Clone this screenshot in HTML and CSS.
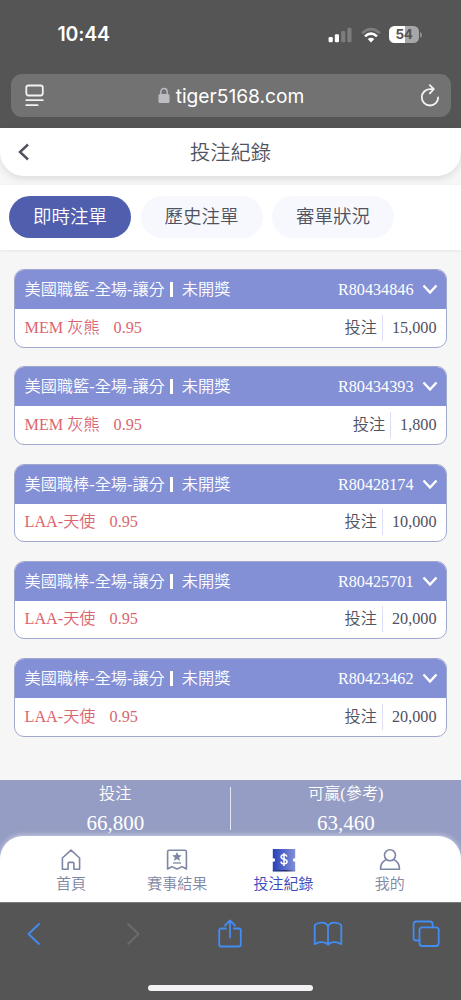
FILE: index.html
```html
<!DOCTYPE html>
<html lang="zh-Hant">
<head>
<meta charset="utf-8">
<meta name="viewport" content="width=device-width, initial-scale=1">
<title>投注紀錄</title>
<link rel="stylesheet" href="styles.css">
</head>
<body>
<div class="phone">
  <header class="browser-top">
    <div class="status">
      <span class="clock">10:44</span>
      <div class="indicators">
        <svg width="24" height="16" viewBox="0 0 24 16"><rect x=".6" y="10" width="4.2" height="5.2" rx="1.2" fill="#fff"/><rect x="6.8" y="7.2" width="4.2" height="8" rx="1.2" fill="#fff"/><rect x="13.1" y="4" width="4.2" height="11.2" rx="1.2" fill="#7d7d7d"/><rect x="19.3" y=".8" width="4.2" height="14.4" rx="1.2" fill="#7d7d7d"/></svg>
        <svg class="wifi" width="20" height="16" viewBox="0 0 20 16" fill="none" stroke-width="2.6"><path d="M1.2 6.2Q10-1.8 18.8 6.2" stroke="#7d7d7d"/><path d="M4 9.4Q10 4 16 9.4" stroke="#fff"/><path d="M6.7 12.1Q10 9.2 13.3 12.1L10 15.5Z" fill="#fff"/></svg>
        <span class="battery"><span>54</span></span>
        <svg class="battery-cap" width="3" height="6" viewBox="0 0 3 6"><path d="M0 0Q2 1 2 3T0 6Z" fill="#929292"/></svg>
      </div>
    </div>
    <div class="address">
      <svg width="20" height="24" viewBox="0 0 20 24" fill="none" stroke="#f2f2f2" stroke-width="1.8" stroke-linecap="round"><rect x="1.3" y="1.5" width="16.5" height="10" rx="2.2"/><path d="M1.3 16.2h16.5M1.3 21.2h11.3"/></svg>
      <div class="site"><svg width="12" height="17" viewBox="0 0 12 17"><path d="M2.8 8V4.700a3.200 3.200 0 0 1 6.400 0V8" fill="none" stroke="#bdbcc3" stroke-width="1.400"/><rect x=".5" y="7" width="11" height="9" rx="1.500" fill="#bdbcc3"/></svg><span>tiger5168.com</span></div>
      <svg width="20" height="23" viewBox="0 0 20 23" fill="none" stroke="#f2f2f2" stroke-width="1.8" stroke-linecap="round" stroke-linejoin="round"><path d="M13.200 5.100H10a8.200 8.200 0 1 0 8.200 8.200M9.800 1.200l4 3.900-4 4.200"/></svg>
    </div>
  </header>
  <main class="app">
    <div class="title-bar">
      <svg width="12" height="18" viewBox="0 0 12 18" fill="none" stroke="#50525f" stroke-width="2.4"><path d="M10 1.5L2 9l8 7.5"/></svg>
      <h1>投注紀錄</h1>
    </div>
    <nav class="tabs"><span class="tab active">即時注單</span><span class="tab">歷史注單</span><span class="tab">審單狀況</span></nav>
    <section class="bets">
      <article class="bet">
        <div class="bet-head"><span>美國職籃-全場-讓分</span><i></i><span>未開獎</span><span class="serial">R80434846</span><svg width="16" height="11" viewBox="0 0 16 11"><path d="M1.500 1.500L8 8.500l6.500-7"/></svg></div>
        <div class="bet-body"><span class="pick">MEM 灰熊</span><span class="odds">0.95</span><span class="stake">投注</span><b>15,000</b></div>
      </article>
      <article class="bet">
        <div class="bet-head"><span>美國職籃-全場-讓分</span><i></i><span>未開獎</span><span class="serial">R80434393</span><svg width="16" height="11" viewBox="0 0 16 11"><path d="M1.500 1.500L8 8.500l6.500-7"/></svg></div>
        <div class="bet-body"><span class="pick">MEM 灰熊</span><span class="odds">0.95</span><span class="stake">投注</span><b>1,800</b></div>
      </article>
      <article class="bet">
        <div class="bet-head"><span>美國職棒-全場-讓分</span><i></i><span>未開獎</span><span class="serial">R80428174</span><svg width="16" height="11" viewBox="0 0 16 11"><path d="M1.500 1.500L8 8.500l6.500-7"/></svg></div>
        <div class="bet-body"><span class="pick">LAA-天使</span><span class="odds">0.95</span><span class="stake">投注</span><b>10,000</b></div>
      </article>
      <article class="bet">
        <div class="bet-head"><span>美國職棒-全場-讓分</span><i></i><span>未開獎</span><span class="serial">R80425701</span><svg width="16" height="11" viewBox="0 0 16 11"><path d="M1.500 1.500L8 8.500l6.500-7"/></svg></div>
        <div class="bet-body"><span class="pick">LAA-天使</span><span class="odds">0.95</span><span class="stake">投注</span><b>20,000</b></div>
      </article>
      <article class="bet">
        <div class="bet-head"><span>美國職棒-全場-讓分</span><i></i><span>未開獎</span><span class="serial">R80423462</span><svg width="16" height="11" viewBox="0 0 16 11"><path d="M1.500 1.500L8 8.500l6.500-7"/></svg></div>
        <div class="bet-body"><span class="pick">LAA-天使</span><span class="odds">0.95</span><span class="stake">投注</span><b>20,000</b></div>
      </article>
    </section>
  </main>
  <footer class="app-footer">
    <div class="summary">
      <div class="total"><span>投注</span><strong>66,800</strong></div>
      <div class="total"><span>可贏(參考)</span><strong>63,460</strong></div>
    </div>
    <nav class="menu">
      <a class="menu-item"><svg width="24" height="24" viewBox="0 0 24 24" fill="none" stroke="#7d86a2" stroke-width="1.6" stroke-linejoin="round"><path d="M3.4 10L12 2.2l8.6 7.8v11.2h-5.7v-5.8a1 1 0 0 0-1-1h-3.8a1 1 0 0 0-1 1v5.8H3.4Z"/></svg><span>首頁</span></a>
      <a class="menu-item"><svg width="24" height="24" viewBox="0 0 24 24" fill="none" stroke="#7d86a2" stroke-width="1.6" stroke-linejoin="round"><path d="M2.6 21V3.8c0-1 .6-1.6 1.6-1.6h15.6c1 0 1.6.6 1.6 1.6V21L17 18.6 12 21l-5-2.4Z"/><path d="M8 15h8" stroke-width="1.3"/><path d="M12 4l1.400 3.100 3.400.3-2.600 2.200.8 3.400-3-1.900L9 13l.8-3.400-2.600-2.200 3.400-.3Z" fill="#7d86a2" stroke="none"/></svg><span>賽事結果</span></a>
      <a class="menu-item current"><svg width="24" height="24" viewBox="0 0 24 24"><defs><linearGradient id="ticket"><stop stop-color="#2941b8"/><stop offset="1" stop-color="#828fd8"/></linearGradient><linearGradient id="ticket-edge"><stop stop-color="#263a9e"/><stop offset=".6" stop-color="#18214f"/><stop offset="1" stop-color="#8490cb"/></linearGradient></defs><path d="M.8 1h22.400v9.400a1.700 1.700 0 1 0 0 3.200v9.600H.8v-9.600a1.700 1.700 0 1 0 0-3.200Z" fill="url(#ticket)"/><path d="M.8 22.200h22.400v1.200H.8Z" fill="url(#ticket-edge)"/><path d="M15 8.600c-.4-1.300-1.400-1.900-3-1.900-1.800 0-2.900.8-2.900 2.200 0 3.200 6 1.300 6 4.700 0 1.400-1.200 2.300-3 2.300-1.900 0-3-.8-3.200-2.300M12 5v13" fill="none" stroke="#fff" stroke-width="1.500"/></svg><span>投注紀錄</span></a>
      <a class="menu-item"><svg width="24" height="24" viewBox="0 0 24 24" fill="none" stroke="#7d86a2" stroke-width="1.6" stroke-linejoin="round"><circle cx="12" cy="7.2" r="5.5"/><path d="M8.4 11.6C4.6 13.2 2.6 16.5 2.5 21.2h19c-.1-4.7-2.1-8-5.9-9.6"/></svg><span>我的</span></a>
    </nav>
  </footer>
  <footer class="browser-bottom">
    <div class="toolbar">
      <svg width="30" height="30" viewBox="0 0 30 30"><path d="M20 5L9.5 15 20 25"/></svg>
      <svg class="disabled" width="30" height="30" viewBox="0 0 30 30"><path d="M11 5l10.500 10L11 25"/></svg>
      <svg width="30" height="30" viewBox="0 0 30 30"><path d="M11 9.5H6.2c-1.5 0-2 .7-2 2v14c0 1.4.7 2 2 2h17.6c1.3 0 2-.7 2-2v-14c0-1.3-.6-2-2-2H19M15 18.5V1.5M10 6.5l5-5 5 5"/></svg>
      <svg width="30" height="30" viewBox="0 0 30 30"><path d="M15 7C12.5 2.5 5 2.8 1.7 6.2v19C5 22.8 12 22 15 25.7c3-3.7 10-2.9 13.3-.5v-19C25 2.8 17.500 2.500 15 7v18.700"/></svg>
      <svg width="30" height="30" viewBox="0 0 30 30"><path d="M8.500 21.500H5.300c-1.800 0-2.700-.8-2.700-2.600V5.200c0-1.800.9-2.700 2.700-2.700h13.600c1.800 0 2.700.9 2.700 2.700v3.200"/><rect x="8.500" y="8.400" width="19.200" height="18.600" rx="2.700"/></svg>
    </div>
    <div class="home-indicator"></div>
  </footer>
</div>
</body>
</html>
```
FILE: styles.css
```css
* { box-sizing: border-box; }
body { margin: 0; background: #555; }
svg { display: block; flex: none; }
.phone {
  width: 461px;
  height: 1000px;
  display: flex;
  flex-direction: column;
  overflow: hidden;
  font-family: "Liberation Serif", "Noto Sans CJK TC", sans-serif;
  font-weight: 350;
  color: #50525f;
}
.browser-top { height: 128px; background: #555; padding: 0 10.5px; flex: none; }
.status { height: 74px; padding: 22px 27.500px 0 47px; display: flex; justify-content: space-between; color: #fff; font-family: Inter, sans-serif; }
.clock { font-size: 19.500px; line-height: 25px; font-weight: 600; letter-spacing: -.2px; }
.indicators { display: flex; height: 25px; align-items: center; }
.wifi { margin-left: 9px; }
.battery { width: 30px; height: 17px; margin-left: 8px; border-radius: 5.5px; background: linear-gradient(90deg, #fff 54%, #a7a7a7 54%); color: #555; font-size: 13.500px; font-weight: 700; line-height: 17px; text-align: center; letter-spacing: -.4px; }
.battery-cap { margin-left: 1px; }
.address { height: 43px; border-radius: 11px; background: #727272; padding: 0 11px 0 14px; display: flex; align-items: center; justify-content: space-between; }
.site { display: flex; align-items: center; gap: 6px; margin-left: -2px; color: #fff; font: 400 19.200px/28px Inter, sans-serif; }
.app { height: 652px; flex: none; background: #f6f6f6; }
.title-bar { height: 47.500px; display: grid; grid-template-columns: 60px 1fr 60px; align-items: center; background: #fff; border-radius: 0 0 24px 24px; box-shadow: 0 3px 7px #0000001a; }
.title-bar svg { margin-left: 18px; }
.title-bar h1 { margin: 0; padding-top: 2px; font-size: 20.300px; line-height: 30px; font-weight: 350; text-align: center; }
.tabs { height: 65.500px; margin-top: 9px; padding: 0 9px; display: flex; gap: 9.500px; align-items: center; background: #fff; box-shadow: 0 1px 3px #00000010; }
.tab { width: 122px; height: 42px; border-radius: 21px; background: #f7f8fd; text-align: center; font-size: 18.500px; line-height: 43px; }
.tab.active { background: #505eae; color: #fff; }
.bets { padding: 19px 14px 0 13.500px; display: grid; gap: 18.750px; }
.bet { height: 78.500px; border: 1.500px solid #a1a8d0; border-radius: 10px; background: #fff; overflow: hidden; font-size: 16.200px; line-height: 24px; }
.bet-head { height: 39px; background: #8390d6; color: #fff; padding: 0 8.500px 0 10px; display: flex; align-items: center; }
.bet-head > span { padding-top: 1px; }
.bet-head i { width: 3px; height: 15px; margin: 0 9px 0 5px; background: #fff; }
.serial { margin-left: auto; }
.bet-head svg { margin-left: 8px; fill: none; stroke: #fff; stroke-width: 2.400; }
.bet-body { height: 37px; padding: 0 9.500px 0 10px; display: flex; align-items: center; }
.pick, .odds { color: #db6671; }
.odds { margin-left: 14px; }
.stake { margin-left: auto; }
.bet-body b { height: 26px; margin-left: 5px; padding-left: 9px; border-left: 1px solid #dcdef5; font-weight: 400; line-height: 26px; }
.app-footer { height: 122px; flex: none; background: #959dc4; }
.summary { height: 56px; display: grid; grid-template-columns: 1fr 1fr; color: #fff; }
.total { display: flex; flex-direction: column; align-items: center; padding-top: 1px; font-size: 16.200px; line-height: 27px; position: relative; }
.total strong { font-size: 21px; line-height: 30px; font-weight: 400; }
.total + .total::before { content: ""; position: absolute; left: -1px; top: 7px; width: 1.500px; height: 43px; background: #e4e6f1; }
.menu { height: 66px; padding: 11.500px 18px 0; display: grid; grid-template-columns: repeat(4, 1fr); background: #fff; border-radius: 23px 23px 0 0; box-shadow: 0 -1px 5px #ffffff80; }
.menu-item { display: flex; flex-direction: column; align-items: center; color: #7d86a2; font-size: 15px; line-height: 24px; }
.current { color: #3949bd; }
.browser-bottom { height: 98px; flex: none; background: #555; border-top: 1px solid #7b7b7b; }
.toolbar { padding: 16px 20px 0 18.500px; display: flex; justify-content: space-between; }
.toolbar svg { fill: none; stroke: #438cf2; stroke-width: 1.800; stroke-linecap: round; stroke-linejoin: round; }
.toolbar .disabled { stroke: #6c6c6c; }
.home-indicator { width: 165px; height: 6px; margin: 36px auto 0; border-radius: 3px; background: #f3f1f3; }
```
